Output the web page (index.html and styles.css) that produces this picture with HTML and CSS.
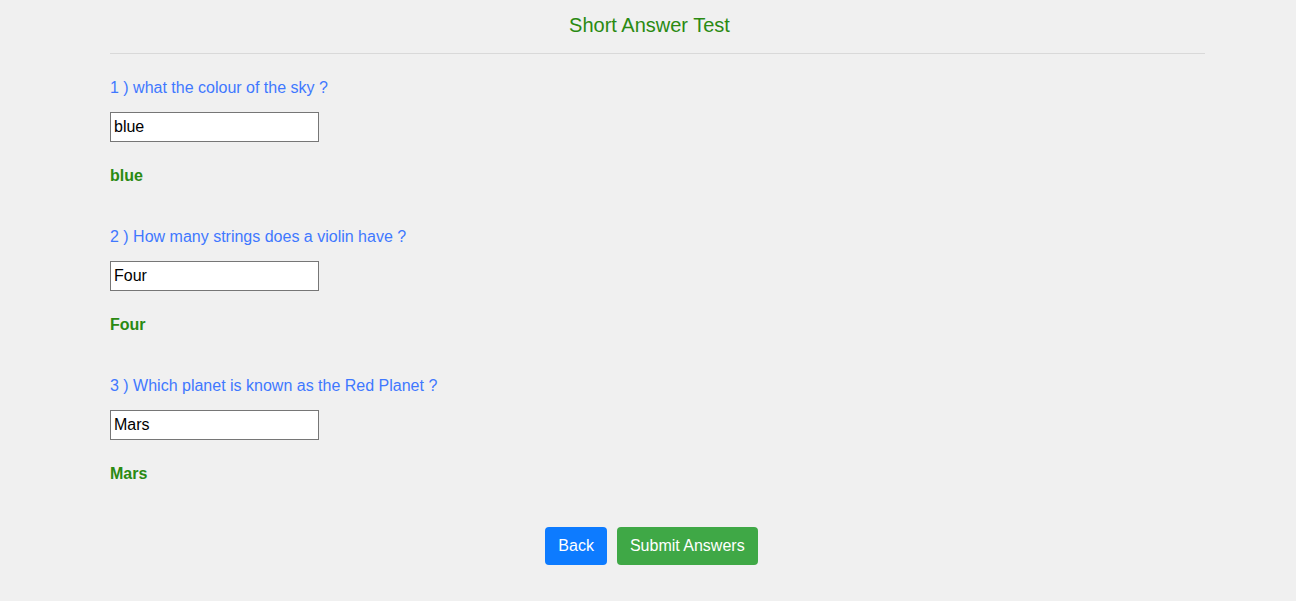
FILE: index.html
```html
<!DOCTYPE html>
<html>
<head>
<meta charset="utf-8">
<link rel="stylesheet" href="styles.css">
</head>
<body>
<div class="page">
  <h2 class="title">Short Answer Test</h2>
  <hr class="rule">
  <div class="question">
    <p class="q-text">1 ) what the colour of the sky ?</p>
    <input class="answer-input" type="text" value="blue">
    <p class="q-answer">blue</p>
  </div>
  <div class="question">
    <p class="q-text">2 ) How many strings does a violin have ?</p>
    <input class="answer-input" type="text" value="Four">
    <p class="q-answer">Four</p>
  </div>
  <div class="question">
    <p class="q-text">3 ) Which planet is known as the Red Planet ?</p>
    <input class="answer-input" type="text" value="Mars">
    <p class="q-answer">Mars</p>
  </div>
  <div class="actions">
    <button class="btn btn-back">Back</button>
    <button class="btn btn-submit">Submit Answers</button>
  </div>
</div>
</body>
</html>
```
FILE: styles.css
```css
html, body {
  margin: 0;
  padding: 0;
  background: #f0f0f0;
  font-family: "Liberation Sans", Arial, sans-serif;
}
.page {
  margin: 0 91px 0 110px;
  padding-top: 13px;
}
.title {
  margin: 0 0 0 -16px;
  font-size: 20px;
  line-height: 24px;
  font-weight: normal;
  color: #2a8a12;
  text-align: center;
}
.rule {
  margin: 16px 0 0 0;
  border: 0;
  border-top: 1px solid #d9d9d9;
  height: 0;
}
.question {
  display: flex;
  flex-direction: column;
  align-items: flex-start;
  padding-top: 25px;
  padding-bottom: 18px;
}
.q-text {
  margin: 0;
  font-size: 16px;
  line-height: 18px;
  color: #3f78ff;
}
.answer-input {
  margin: 15px 0 0 0;
  width: 209px;
  height: 30px;
  box-sizing: border-box;
  border: 1px solid #767676;
  background: #fff;
  font-family: "Liberation Sans", Arial, sans-serif;
  font-size: 16px;
  color: #000;
  padding: 0 3px;
  outline: none;
}
.q-answer {
  margin: 25px 0 0 0;
  font-size: 16px;
  line-height: 18px;
  font-weight: bold;
  color: #2a8a12;
}
.actions {
  display: flex;
  justify-content: center;
  gap: 10px;
  margin-top: 26px;
  margin-left: -12px;
}
.btn {
  font-family: "Liberation Sans", Arial, sans-serif;
  font-size: 16px;
  line-height: 24px;
  padding: 6px 12px;
  border: 1px solid transparent;
  border-radius: 4px;
  color: #fff;
}
.btn-back {
  background: #0d7bff;
}
.btn-submit {
  background: #3fa846;
}
```
